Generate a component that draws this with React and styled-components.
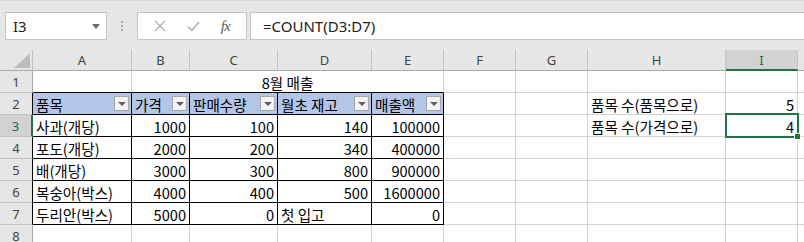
import React from "react";
import styled, { createGlobalStyle } from "styled-components";

const GlobalStyle = createGlobalStyle`
  body {
    margin: 0;
    background: #ffffff;
    overflow: hidden;
  }
`;

const Window = styled.div`
  width: 804px;
  height: 242px;
  overflow: hidden;
  background: #ffffff;
  font-family: "Noto Sans CJK KR", "Noto Sans", sans-serif;
`;

const FormulaBar = styled.div`
  height: 50px;
  box-sizing: border-box;
  background: #e6e6e6;
  border-top: 1px solid #d9d9d9;
  padding: 11px 0 0 5px;
  display: flex;
  align-items: flex-start;
`;

const Box = styled.div`
  height: 28px;
  box-sizing: border-box;
  background: #ffffff;
  border: 1px solid #c6c6c6;
  display: flex;
  align-items: center;
`;

const NameBox = styled(Box)`
  width: 102px;
  padding: 0 6px 0 7px;
  justify-content: space-between;
  font-family: "Noto Sans", sans-serif;
  font-size: 15px;
  color: #222;
`;

const Caret = styled.span`
  width: 0;
  height: 0;
  border-left: 4px solid transparent;
  border-right: 4px solid transparent;
  border-top: 5px solid #6a6a6a;
`;

const Grip = styled.div`
  width: 30px;
  height: 28px;
  display: flex;
  flex-direction: column;
  align-items: center;
  justify-content: center;
  gap: 2px;
  & > span {
    width: 2px;
    height: 2px;
    background: #a6a6a6;
  }
`;

const FxBox = styled(Box)`
  width: 110px;
  justify-content: space-around;
  padding: 0 6px;
`;

const FxLabel = styled.span`
  font-family: "Liberation Serif", serif;
  font-style: italic;
  font-size: 15px;
  color: #5a5a5a;
  letter-spacing: -1px;
`;

const FormulaInput = styled(Box)`
  flex: 1;
  margin-left: 3px;
  border-right: none;
  padding-left: 12px;
  font-family: "Noto Sans", sans-serif;
  font-size: 15px;
  color: #222;
`;

const Sheet = styled.div`
  display: grid;
  grid-template-columns: 33px 99px 58px 88px 94px 72px 72px 72px 138px 72px 72px;
  grid-template-rows: 21px;
  grid-auto-rows: 22px;
`;

const Head = styled.div`
  box-sizing: border-box;
  background: ${(p) => (p.$active ? "#d2d2d2" : "#e6e6e6")};
  border-right: 1px solid #c4c4c4;
  border-bottom: 1px solid #ababab;
  display: flex;
  align-items: center;
  justify-content: center;
  font-family: "Noto Sans", sans-serif;
  font-size: 13px;
  color: ${(p) => (p.$active ? "#1e6b40" : "#444444")};
`;

const ColHead = styled(Head)`
  border-bottom: ${(p) => (p.$active ? "2px solid #217346" : "1px solid #ababab")};
`;

const RowHead = styled(Head)`
  border-bottom: 1px solid #c4c4c4;
  border-right: ${(p) =>
    p.$active ? "2px solid #217346" : `1px solid ${p.$edge || "#ababab"}`};
`;

const Corner = styled(Head)`
  justify-content: flex-end;
  align-items: flex-end;
  padding: 0 2px 2px 0;
`;

const Cell = styled.div`
  box-sizing: border-box;
  position: relative;
  grid-column: ${(p) => p.$span || "auto"};
  background: ${(p) => p.$fill || "#ffffff"};
  border-right: 1px solid ${(p) => p.$r || "#d4d4d4"};
  border-bottom: 1px solid ${(p) => p.$b || "#d4d4d4"};
  display: flex;
  align-items: center;
  justify-content: ${(p) => p.$align || "flex-start"};
  padding: 2px 3px 0;
  font-size: 14.6px;
  line-height: 20px;
  color: #000000;
  white-space: nowrap;
`;

const Selected = styled(Cell)`
  z-index: 1;
  &::after {
    content: "";
    position: absolute;
    top: -2px;
    left: -1px;
    right: -2px;
    bottom: -2px;
    border: 2px solid #217346;
  }
  &::before {
    content: "";
    position: absolute;
    right: -4px;
    bottom: -4px;
    width: 5px;
    height: 5px;
    background: #217346;
    border: 1px solid #ffffff;
    z-index: 2;
  }
`;

const Filter = styled.span`
  margin-left: auto;
  margin-right: -1px;
  margin-top: -2px;
  width: 15px;
  height: 15px;
  box-sizing: border-box;
  background: #f3f3f3;
  border: 1px solid #a8a8a8;
  display: flex;
  align-items: center;
  justify-content: center;
  &::after {
    content: "";
    border-left: 4px solid transparent;
    border-right: 4px solid transparent;
    border-top: 4px solid #5f5f5f;
    margin-top: 1px;
  }
`;

const BLACK = "#000000";
const HEADER_FILL = "#b4c6e7";
const letters = ["A", "B", "C", "D", "E", "F", "G", "H", "I", ""];
const headers = ["품목", "가격", "판매수량", "월초 재고", "매출액"];
const rows = [
  ["사과(개당)", 1000, 100, 140, 100000],
  ["포도(개당)", 2000, 200, 340, 400000],
  ["배(개당)", 3000, 300, 800, 900000],
  ["복숭아(박스)", 4000, 400, 500, 1600000],
  ["두리안(박스)", 5000, 0, "첫 입고", 0],
];
const side = [
  ["품목 수(품목으로)", 5],
  ["품목 수(가격으로)", 4],
];

function Blank({ n }) {
  return Array.from({ length: n }, (_, i) => <Cell key={i} />);
}

function TailCells({ row }) {
  const label = side[row - 2];
  return (
    <>
      <Cell />
      <Cell />
      <Cell>{label ? label[0] : ""}</Cell>
      {row === 3 ? (
        <Selected $align="flex-end">{label[1]}</Selected>
      ) : (
        <Cell $align="flex-end">{label ? label[1] : ""}</Cell>
      )}
      <Cell />
    </>
  );
}

export default function App() {
  return (
    <Window>
      <GlobalStyle />
      <FormulaBar>
        <NameBox>
          I3
          <Caret />
        </NameBox>
        <Grip>
          <span />
          <span />
          <span />
        </Grip>
        <FxBox>
          <svg width="12" height="12" viewBox="0 0 12 12">
            <path d="M1 1 L11 11 M11 1 L1 11" stroke="#b3b3b3" strokeWidth="1.4" />
          </svg>
          <svg width="13" height="11" viewBox="0 0 13 11">
            <path d="M1 5.5 L4.8 9.5 L12 1" stroke="#b3b3b3" strokeWidth="1.8" fill="none" />
          </svg>
          <FxLabel>fx</FxLabel>
        </FxBox>
        <FormulaInput>=COUNT(D3:D7)</FormulaInput>
      </FormulaBar>

      <Sheet>
        <Corner>
          <svg width="16" height="15" viewBox="0 0 16 15">
            <path d="M16 0 L16 15 L0 15 Z" fill="#bdbdbd" />
          </svg>
        </Corner>
        {letters.map((l, i) => (
          <ColHead key={i} $active={l === "I"}>
            {l}
          </ColHead>
        ))}

        <RowHead>1</RowHead>
        <Cell $b={BLACK} />
        <Cell $span="span 4" $b={BLACK} $align="center">
          8월 매출
        </Cell>
        <Blank n={5} />

        <RowHead $edge={BLACK}>2</RowHead>
        {headers.map((h) => (
          <Cell key={h} $fill={HEADER_FILL} $r={BLACK} $b={BLACK}>
            {h}
            <Filter />
          </Cell>
        ))}
        <TailCells row={2} />

        {rows.map((r, i) => (
          <React.Fragment key={i}>
            <RowHead $active={i === 0} $edge={BLACK}>
              {i + 3}
            </RowHead>
            {r.map((v, j) => (
              <Cell
                key={j}
                $r={BLACK}
                $b={BLACK}
                $align={typeof v === "number" ? "flex-end" : "flex-start"}
              >
                {v}
              </Cell>
            ))}
            <TailCells row={i + 3} />
          </React.Fragment>
        ))}

        <RowHead>8</RowHead>
        <Blank n={10} />
      </Sheet>
    </Window>
  );
}
